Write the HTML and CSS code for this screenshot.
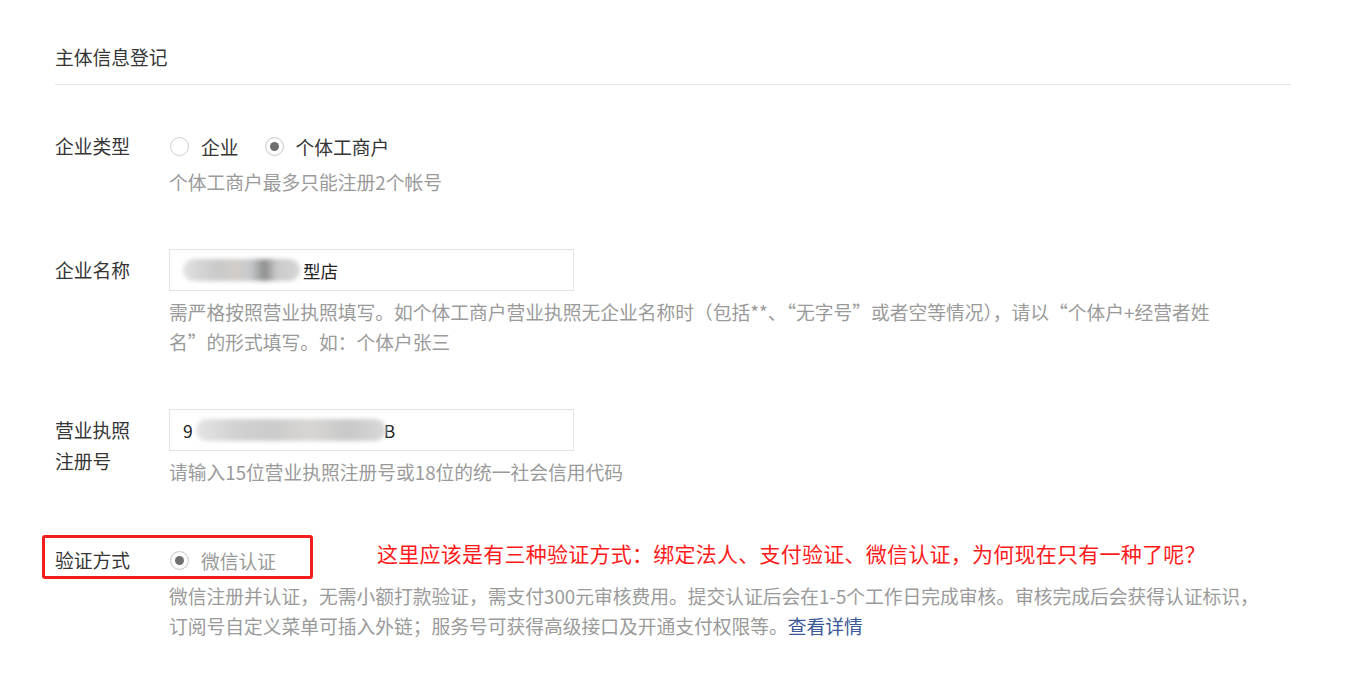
FILE: index.html
```html
<!DOCTYPE html>
<html lang="zh-CN">
<head>
  <meta charset="UTF-8" />
  <meta name="viewport" content="width=device-width, initial-scale=1.0" />
  <title>主体信息登记</title>
  <link rel="stylesheet" href="styles.css">
</head>
<body>
  <div class="page">
    <div class="page-header">
      <h2>主体信息登记</h2>
    </div>
    <div class="form">
      <div class="row">
        <div class="label">企业类型</div>
        <div class="content">
          <div class="radio-group">
            <label class="radio-item"><span class="radio"></span>企业</label>
            <label class="radio-item"><span class="radio checked"></span>个体工商户</label>
          </div>
          <p class="hint">个体工商户最多只能注册2个帐号</p>
        </div>
      </div>
      <div class="row">
        <div class="label">企业名称</div>
        <div class="content">
          <div class="field"><span class="mosaic mosaic-name"></span>型店</div>
          <p class="hint hint-field">需严格按照营业执照填写。如个体工商户营业执照无企业名称时（包括**、“无字号”或者空等情况），请以“个体户+经营者姓<br>名”的形式填写。如：个体户张三</p>
        </div>
      </div>
      <div class="row">
        <div class="label">营业执照注册号</div>
        <div class="content">
          <div class="field">9<span class="mosaic mosaic-code"></span>B</div>
          <p class="hint hint-field">请输入15位营业执照注册号或18位的统一社会信用代码</p>
        </div>
      </div>
      <div class="row row-verify">
        <div class="mark-box"></div>
        <div class="mark-note">这里应该是有三种验证方式：绑定法人、支付验证、微信认证，为何现在只有一种了呢？</div>
        <div class="label">验证方式</div>
        <div class="content">
          <div class="radio-group">
            <label class="radio-item disabled"><span class="radio checked"></span>微信认证</label>
          </div>
          <p class="hint">微信注册并认证，无需小额打款验证，需支付300元审核费用。提交认证后会在1-5个工作日完成审核。审核完成后会获得认证标识，订阅号自定义菜单可插入外链；服务号可获得高级接口及开通支付权限等。<a href="#" class="link">查看详情</a></p>
        </div>
      </div>
    </div>
  </div>
</body>
</html>
```

FILE: styles.css
```css
* {
  margin: 0;
  padding: 0;
  box-sizing: border-box;
}
body {
  font-family: "Noto Sans CJK SC", "Liberation Sans", sans-serif;
  background: #fff;
  color: #353535;
  font-size: 18.75px;
}
.page {
  width: 1236px;
  margin-left: 55px;
}
.page-header {
  padding-top: 42px;
  padding-bottom: 12px;
  border-bottom: 1px solid #e4e4e4;
}
.page-header h2 {
  font-size: 18.75px;
  font-weight: normal;
  line-height: 30px;
}
.form {
  padding-top: 40px;
}
.row {
  display: flex;
  margin-bottom: 52px;
  position: relative;
}
.label {
  flex: 0 0 114px;
  padding-right: 28px;
  padding-top: 5px;
  line-height: 31px;
}
.content {
  width: 1100px;
}
.radio-group {
  display: flex;
  align-items: center;
  gap: 26px;
  height: 42px;
  padding-left: 1px;
}
.radio-item {
  display: flex;
  align-items: center;
  gap: 12px;
  cursor: pointer;
}
.radio {
  width: 19px;
  height: 19px;
  border: 1px solid #d0d0d0;
  border-radius: 50%;
  background: #fff;
  display: flex;
  align-items: center;
  justify-content: center;
}
.radio.checked {
  border-color: #cacaca;
  box-shadow: inset 0 0 2px rgba(0, 0, 0, 0.1);
}
.radio.checked::after {
  content: "";
  width: 9px;
  height: 9px;
  border-radius: 50%;
  background: #6f6f6f;
}
.radio-item.disabled {
  color: #9a9a9a;
  cursor: default;
}
.hint {
  color: #9a9a9a;
  line-height: 30px;
}
.hint-field {
  margin-top: 6px;
}
.field {
  width: 405px;
  height: 42px;
  border: 1px solid #e3e3e3;
  padding: 0 13px;
  display: flex;
  align-items: center;
  font-size: 17.5px;
  color: #222;
}
.mosaic {
  display: inline-block;
  height: 22px;
  border-radius: 11px;
  filter: blur(2px);
}
.mosaic-name {
  width: 117px;
  margin-right: 3px;
  background: linear-gradient(to right, #e2e2e2, #d4d4d4 15%, #c9c9c9 30%, #d2cdc8 45%, #c6c8cc 58%, #8f8f8f 70%, #c9c9c9 80%, #d6d6d6);
}
.mosaic-code {
  width: 190px;
  margin-left: 3px;
  margin-right: -2px;
  background: linear-gradient(to right, #e4e4e4, #d2d2d2 20%, #cbcbcb 40%, #d8d6d4 60%, #c8c8c8 80%, #d9d9d9);
}
.link {
  color: #3a5796;
  text-decoration: none;
}
.mark-box {
  position: absolute;
  left: -13px;
  top: -4px;
  width: 271px;
  height: 44px;
  border: 3px solid #f41d1d;
  border-radius: 3px;
}
.mark-note {
  position: absolute;
  left: 322px;
  top: -1px;
  font-size: 21px;
  line-height: 30px;
  letter-spacing: 0.25px;
  color: #ff1a1a;
  white-space: nowrap;
}
```
